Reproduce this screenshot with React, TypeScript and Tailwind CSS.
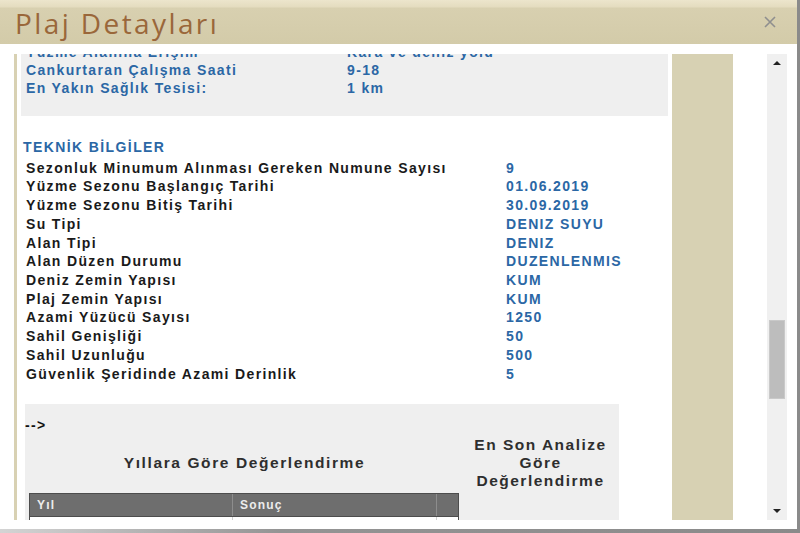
import React from "react";

const tech: [string, string][] = [
  ["Sezonluk Minumum Alınması Gereken Numune Sayısı", "9"],
  ["Yüzme Sezonu Başlangıç Tarihi", "01.06.2019"],
  ["Yüzme Sezonu Bitiş Tarihi", "30.09.2019"],
  ["Su Tipi", "DENIZ SUYU"],
  ["Alan Tipi", "DENIZ"],
  ["Alan Düzen Durumu", "DUZENLENMIS"],
  ["Deniz Zemin Yapısı", "KUM"],
  ["Plaj Zemin Yapısı", "KUM"],
  ["Azami Yüzücü Sayısı", "1250"],
  ["Sahil Genişliği", "50"],
  ["Sahil Uzunluğu", "500"],
  ["Güvenlik Şeridinde Azami Derinlik", "5"],
];

const general: [string, string][] = [
  ["Yüzme Alanına Erişim", "Kara ve deniz yolu"],
  ["Cankurtaran Çalışma Saati", "9-18"],
  ["En Yakın Sağlık Tesisi:", "1 km"],
];

export default function App() {
  return (
    <div className="w-[800px] h-[533px] overflow-hidden bg-[linear-gradient(to_right,#d4d4d4,#949494_35%,#8a8a8a)] font-['Liberation_Sans',Arial,sans-serif]">
      <div className="w-[797px] h-[529px] bg-white flex flex-col">
        {/* Header */}
        <div className="h-[44px] shrink-0 flex items-center justify-between pl-[15px] pr-[21px] bg-[linear-gradient(to_bottom,#ece5cc_0px,#e4dcbf_7px,#d8d0b0_8px,#d3cba9_100%)]">
          <div className="font-['Open_Sans',sans-serif] text-[28px] leading-[44px] pt-[1px] tracking-[2.4px] text-[#9a673a]">
            Plaj Detayları
          </div>
          <svg width="12" height="12" viewBox="0 0 12 12">
            <path d="M1 1 L11 11 M11 1 L1 11" stroke="#8f8f8f" strokeWidth="1.6" />
          </svg>
        </div>

        {/* Body */}
        <div className="flex pt-[10px]">
          <div className="w-[14px] shrink-0" />
          <div className="w-[753px] h-[466px] overflow-hidden border-l-[3px] border-[#d8d1b3] flex shrink-0">
            {/* main column */}
            <div className="ml-[4px] w-[647px] h-full overflow-hidden shrink-0">
              <div className="-mt-[15px] text-[14px] font-bold tracking-[1.35px]">
                <div className="bg-[#efefef] pt-[4px] pb-[19px]">
                  {general.map(([l, v]) => (
                    <div key={l} className="flex h-[18px] leading-[18px] text-[#2b67a5]">
                      <div className="pl-[5px] w-[326px] shrink-0">{l}</div>
                      <div>{v}</div>
                    </div>
                  ))}
                </div>

                <div className="mt-[22px] pl-[2px] h-[18px] leading-[18px] text-[14px] tracking-[1.4px] text-[#2b67a5]">
                  TEKNİK BİLGİLER
                </div>
                <div className="mt-[2.7px]">
                  {tech.map(([l, v]) => (
                    <div key={l} className="flex h-[18.73px] leading-[18.73px]">
                      <div className="pl-[5px] w-[485px] shrink-0 text-[#1a1a1a]">{l}</div>
                      <div className="text-[#2b67a5]">{v}</div>
                    </div>
                  ))}
                </div>

                <div className="mt-[20.6px] ml-[4px] w-[594px] h-[140px] bg-[#efefef]">
                  <div className="pt-[12px] h-[30px] leading-[18px] text-[#111]">--&gt;</div>
                  <div className="flex">
                    <div className="w-[437px] shrink-0">
                      <div className="mt-[20px] h-[18px] leading-[18px] text-[15.5px] tracking-[1.6px] text-[#2e2e2e] text-center pl-[2px]">
                        Yıllara Göre Değerlendirme
                      </div>
                      <div className="mt-[21px] ml-[4px] w-[430px] border border-[#4d4d4d] tracking-[1.2px] text-[12px]">
                        <div className="flex h-[22px] bg-[#6e6e6e] text-[#ececec] leading-[22px]">
                          <div className="w-[203px] pl-[7px] border-r border-[#8d8d8d]">Yıl</div>
                          <div className="w-[204px] pl-[7px] border-r border-[#8d8d8d]">Sonuç</div>
                          <div className="flex-1" />
                        </div>
                        <div className="flex h-[22px] bg-white border-t border-[#4d4d4d]">
                          <div className="w-[203px] border-r border-[#d0d0d0]" />
                          <div className="w-[204px] border-r border-[#d0d0d0]" />
                          <div className="flex-1" />
                        </div>
                      </div>
                    </div>
                    <div className="w-[157px] mt-[2px] text-center text-[15.5px] leading-[18px] tracking-[1.5px] text-[#2e2e2e]">
                      En Son Analize
                      <br />
                      Göre
                      <br />
                      Değerlendirme
                    </div>
                  </div>
                </div>
              </div>
            </div>
            <div className="ml-[4px] w-[61px] h-full bg-[#d7d1b3] shrink-0" />
            <div className="flex-1" />
          </div>

          {/* Scrollbar */}
          <div className="w-[20px] h-[466px] bg-[#f0f0f0] flex flex-col items-center shrink-0">
            <svg width="8" height="4" viewBox="0 0 8 4" className="mt-[7px]">
              <path d="M0 4 L4 0 L8 4 Z" fill="#222" />
            </svg>
            <div className="mt-[255px] w-[16px] h-[79px] bg-[#bdbdbd] border border-[#c9c9c9]" />
            <div className="flex-1" />
            <svg width="8" height="4" viewBox="0 0 8 4" className="mb-[7px]">
              <path d="M0 0 L8 0 L4 4 Z" fill="#222" />
            </svg>
          </div>
          <div className="w-[10px] shrink-0" />
        </div>
      </div>
    </div>
  );
}
